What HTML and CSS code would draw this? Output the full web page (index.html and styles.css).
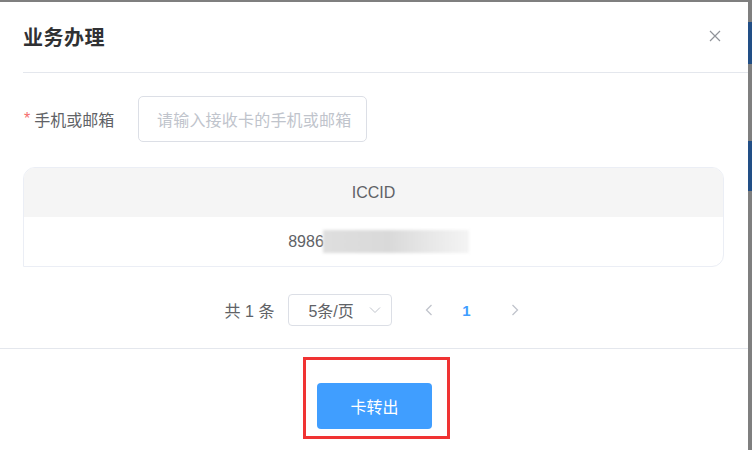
FILE: index.html
```html
<!DOCTYPE html>
<html lang="zh-CN">
<head>
    <meta charset="UTF-8">
    <meta name="viewport" content="width=device-width, initial-scale=1.0">
    <title>业务办理</title>
    <link rel="stylesheet" href="styles.css">
</head>
<body>
    <div class="screen">
        <div class="dialog">
            <div class="dialog-header">
                <span class="dialog-title">业务办理</span>
                <button class="dialog-close" aria-label="关闭">
                    <svg width="12" height="12" viewBox="0 0 12 12">
                        <path d="M1 1L11 11M11 1L1 11" stroke="#909399" stroke-width="1.2" fill="none"/>
                    </svg>
                </button>
            </div>

            <div class="dialog-body">
                <div class="form-item">
                    <label class="form-label"><span class="required">*</span>手机或邮箱</label>
                    <div class="input-box">请输入接收卡的手机或邮箱</div>
                </div>

                <div class="table">
                    <div class="table-head">ICCID</div>
                    <div class="table-row">
                        <span>8986</span><span class="masked"></span>
                    </div>
                </div>

                <div class="pagination">
                    <span class="total">共 1 条</span>
                    <div class="size-select">
                        <span>5条/页</span>
                        <svg width="12" height="8" viewBox="0 0 12 8">
                            <path d="M1 1.5L6 6.5L11 1.5" stroke="#c0c4cc" stroke-width="1" fill="none"/>
                        </svg>
                    </div>
                    <button class="page-btn">
                        <svg width="8" height="12" viewBox="0 0 8 12">
                            <path d="M6.5 1L1.5 6L6.5 11" stroke="#c0c4cc" stroke-width="1.3" fill="none"/>
                        </svg>
                    </button>
                    <span class="page-num">1</span>
                    <button class="page-btn">
                        <svg width="8" height="12" viewBox="0 0 8 12">
                            <path d="M1.5 1L6.5 6L1.5 11" stroke="#c0c4cc" stroke-width="1.3" fill="none"/>
                        </svg>
                    </button>
                </div>
            </div>

            <div class="dialog-footer">
                <div class="highlight">
                    <button class="btn-primary">卡转出</button>
                </div>
            </div>
        </div>

        <div class="side">
            <div class="side-tab tab-one"></div>
            <div class="side-tab tab-two"></div>
        </div>
    </div>
</body>
</html>
```

FILE: styles.css
```css
* {
    box-sizing: border-box;
}
body {
    margin: 0;
    width: 752px;
    height: 450px;
    overflow: hidden;
    background-color: #7f7f7f;
    font-family: "Liberation Sans", "Noto Sans CJK SC", sans-serif;
    color: #606266;
}
.screen {
    display: flex;
    padding-top: 2px;
    height: 450px;
}
.dialog {
    width: 748px;
    height: 448px;
    background-color: #ffffff;
    display: flex;
    flex-direction: column;
}
.dialog-header {
    margin-left: 23px;
    height: 71px;
    padding-right: 27px;
    border-bottom: 1px solid #e4e7ed;
    display: flex;
    align-items: center;
    justify-content: space-between;
}
.dialog-title {
    font-size: 20px;
    font-weight: bold;
    color: #303133;
    letter-spacing: 0.5px;
    margin-top: -2px;
}
.dialog-close {
    border: none;
    background: none;
    padding: 0;
    width: 12px;
    height: 12px;
    display: flex;
    margin-top: -2px;
}
.dialog-body {
    padding: 23px 24px 0 23px;
    border-bottom: 1px solid #e4e7ed;
    height: 276px;
}
.form-item {
    display: flex;
    align-items: center;
    height: 46px;
}
.form-label {
    width: 115px;
    font-size: 16px;
    color: #606266;
    display: flex;
    align-items: center;
}
.required {
    color: #f56c6c;
    margin: 0 4px 0 1px;
}
.input-box {
    width: 229px;
    height: 46px;
    border: 1px solid #dcdfe6;
    border-radius: 5px;
    padding-left: 18px;
    display: flex;
    align-items: center;
    font-size: 16px;
    color: #c0c4cc;
    letter-spacing: 0.2px;
}
.table {
    margin-top: 25px;
    width: 701px;
    border: 1px solid #ebeef5;
    border-radius: 12px 12px 12px 0;
    overflow: hidden;
}
.table-head {
    height: 49px;
    background-color: #f5f5f5;
    display: flex;
    align-items: center;
    justify-content: center;
    font-size: 16px;
    color: #606266;
}
.table-row {
    height: 49px;
    display: flex;
    align-items: center;
    justify-content: center;
    font-size: 16px;
    color: #606266;
    padding-left: 10px;
}
.masked {
    display: inline-block;
    width: 146px;
    height: 23px;
    background: linear-gradient(90deg, #dedede 0%, #d9d9d9 45%, #e6e6e6 70%, #f4f4f4 100%);
    filter: blur(1.5px);
    margin-left: -1px;
}
.pagination {
    margin-top: 27px;
    display: flex;
    align-items: center;
    justify-content: center;
    padding-left: 10px;
    font-size: 16px;
}
.total {
    margin-right: 14px;
    color: #606266;
}
.size-select {
    width: 104px;
    height: 32px;
    border: 1px solid #dcdfe6;
    border-radius: 4px;
    display: flex;
    align-items: center;
    justify-content: space-between;
    padding: 0 10px 0 19px;
    color: #606266;
    margin-right: 20px;
}
.page-btn {
    width: 34px;
    height: 32px;
    border: none;
    background: none;
    padding: 0;
    display: flex;
    align-items: center;
    justify-content: center;
}
.page-num {
    width: 40px;
    text-align: center;
    color: #409eff;
    font-weight: bold;
    font-size: 15px;
    margin: 0 12px 0 0;
}
.dialog-footer {
    display: flex;
    justify-content: center;
    padding-top: 8px;
}
.highlight {
    border: 3px solid #f03333;
    padding: 23px 15px 7px 11px;
    margin-left: 5px;
}
.btn-primary {
    width: 115px;
    height: 46px;
    background-color: #409eff;
    border: none;
    border-radius: 4px;
    color: #ffffff;
    font-family: "Noto Sans CJK SC", sans-serif;
    font-size: 16px;
}
.side {
    width: 4px;
    padding-top: 20px;
}
.side-tab {
    background-color: #224f86;
}
.tab-one {
    height: 42px;
}
.tab-two {
    height: 50px;
    margin-top: 77px;
}
```
